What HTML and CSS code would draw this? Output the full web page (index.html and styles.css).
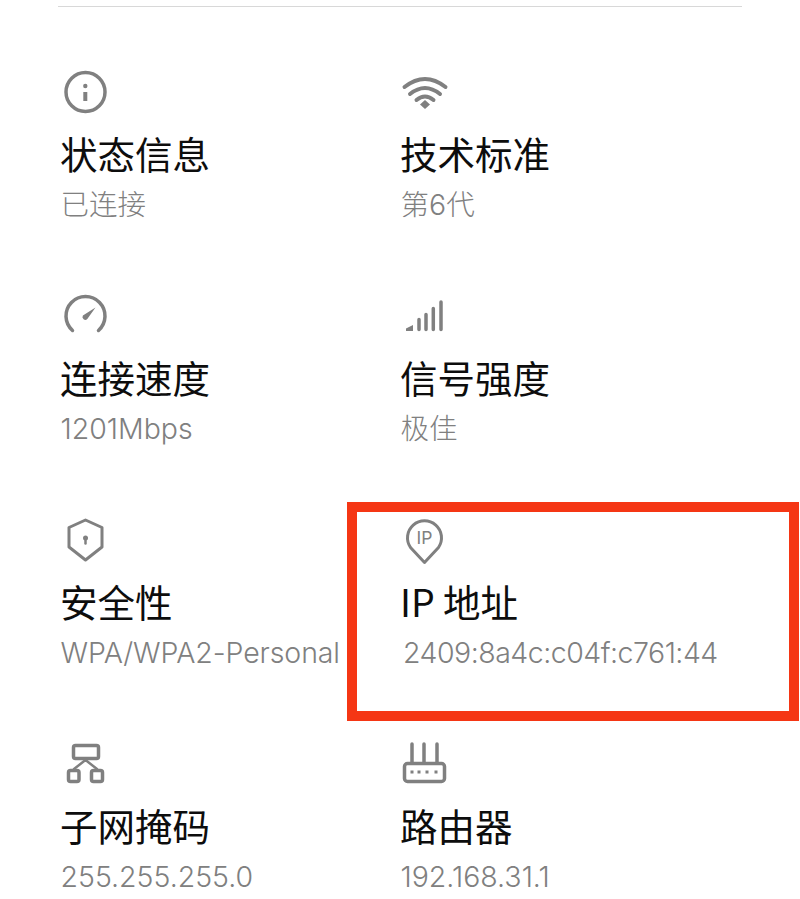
FILE: index.html
```html
<!DOCTYPE html>
<html lang="zh-CN">
<head>
<meta charset="utf-8">
<title>WLAN 详情</title>
<link rel="stylesheet" href="styles.css">
</head>
<body>
<main class="page">
  <div class="rule"></div>
  <section class="grid">
    <div class="item">
      <svg class="icon" viewBox="0 0 48 48"><circle class="ln" cx="24.5" cy="24" r="19.5"/><circle class="fl" cx="24.3" cy="18" r="2.2"/><path class="ln thick" d="M24.3 24v9"/></svg>
      <div class="title">状态信息</div>
      <div class="sub">已连接</div>
    </div>
    <div class="item">
      <svg class="icon" viewBox="0 0 48 48"><path class="ln wide" d="M3.5 19Q24 3 44.5 19"/><path class="ln wide" d="M9 26Q24 14 39 26"/><path class="ln wide" d="M15.5 32Q24 25 32.5 32"/><path class="fl" d="M24 32l5 4.5-5 4.5-5-4.500z"/></svg>
      <div class="title">技术标准</div>
      <div class="sub">第6代</div>
    </div>
    <div class="item">
      <svg class="icon" viewBox="0 0 48 48"><path class="ln" d="M11.5 38.5A19.5 19.5 0 1 1 37.5 38.5"/><path class="fl" d="M34.5 15.5L26.3 27a2.8 2.8 0 0 1-4.400-3.400z"/></svg>
      <div class="title">连接速度</div>
      <div class="sub">1201Mbps</div>
    </div>
    <div class="item">
      <svg class="icon" viewBox="0 0 48 48"><path class="fl" d="M5 39v-2.5L12 33v6z"/><path class="ln" d="M18 27.5V37.500M25 22.500V37.500M32.300 16.500V37.500M40 10V37.500"/></svg>
      <div class="title">信号强度</div>
      <div class="sub">极佳</div>
    </div>
    <div class="item">
      <svg class="icon" viewBox="0 0 48 48"><path class="ln join" d="M24.500 4L41 11.500V31L24.500 44L8 31V11.500Z"/><circle class="fl" cx="24.500" cy="22" r="2.500"/><path class="ln thin" d="M24.500 22v5.500"/></svg>
      <div class="title">安全性</div>
      <div class="sub sub-wpa">WPA/WPA2-Personal</div>
    </div>
    <div class="item">
      <svg class="icon" viewBox="0 0 48 48"><path class="ln join" d="M23.500 46.500L9.500 31.500A17 17 0 1 1 37.500 31.500Z"/><text class="pin-text" x="23.500" y="27.500">IP</text></svg>
      <div class="title">IP 地址</div>
      <div class="sub sub-ip">2409:8a4c:c04f:c761:44</div>
    </div>
    <div class="item">
      <svg class="icon" viewBox="0 0 48 48"><rect class="ln" x="12.500" y="5.500" width="25" height="13" rx="2"/><rect class="ln" x="7.500" y="30.500" width="10.500" height="11" rx="2"/><rect class="ln" x="30.500" y="30.500" width="11" height="11" rx="2"/><path class="ln thin" d="M24.500 20L13 29M24.500 20L36 29"/></svg>
      <div class="title">子网掩码</div>
      <div class="sub">255.255.255.0</div>
    </div>
    <div class="item">
      <svg class="icon" viewBox="0 0 48 48"><rect class="ln" x="3.500" y="23.500" width="40" height="18" rx="3"/><path class="ln" d="M11 4V23M23 4V23M36 4V23"/><path class="fl" d="M9.500 30.500h3v3h-3zM16.500 30.500h3v3h-3zM24.500 30.500h3v3h-3zM33.500 30.500h3v3h-3z"/></svg>
      <div class="title">路由器</div>
      <div class="sub">192.168.31.1</div>
    </div>
  </section>
  <div class="mark"></div>
</main>
</body>
</html>
```
FILE: styles.css
```css
* { box-sizing: border-box; }
html, body { margin: 0; background: #fff; }
.page {
  position: relative;
  width: 800px;
  height: 899px;
  overflow: hidden;
  font-family: "Noto Sans CJK SC", "Noto Sans", sans-serif;
}
.rule { height: 1px; margin: 6px 58px 0; background: #d8d8d8; }
.grid {
  display: grid;
  grid-template-columns: 340px 340px;
  grid-auto-rows: 224px;
  padding: 61px 0 0 61px;
}
.item { display: flex; flex-direction: column; min-width: 0; }
.icon { display: block; width: 48px; height: 48px; overflow: visible; }
.ln { fill: none; stroke: #808080; stroke-width: 3.5; stroke-linecap: round; }
.wide { stroke-width: 4; }
.thin { stroke-width: 2.5; }
.thick { stroke-width: 4; stroke-linecap: butt; }
.join { stroke-width: 3; stroke-linejoin: round; }
.fl { fill: #808080; }
.pin-text {
  fill: #808080;
  font-family: "Inter", sans-serif;
  font-size: 17.5px;
  font-weight: 400;
  text-anchor: middle;
}
.title {
  margin: 12px 0 0 -1px;
  font-size: 37.5px;
  line-height: 50px;
  color: #0d0d0d;
  white-space: nowrap;
}
.sub {
  margin: 7px 0 0 -0.5px;
  font-family: "Inter", "Noto Sans CJK SC", sans-serif;
  font-size: 28.5px;
  font-weight: 300;
  line-height: 40px;
  color: #808080;
  white-space: nowrap;
}
.sub-wpa { letter-spacing: -0.1px; }
.sub-ip {
  margin-left: 2px;
  letter-spacing: -0.5px;
}
.mark {
  position: absolute;
  left: 347px;
  top: 502px;
  width: 452px;
  height: 219px;
  border: 10.5px solid #f53614;
  pointer-events: none;
}
```
